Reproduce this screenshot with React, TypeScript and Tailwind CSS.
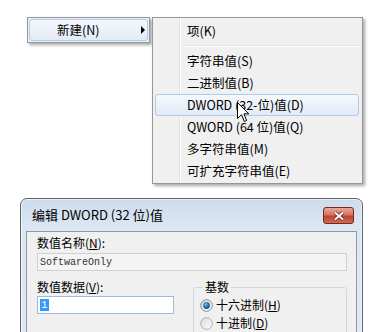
import React from "react";

type MenuItem = { label: string; highlighted?: boolean };

const submenuItems: MenuItem[] = [
  { label: "字符串值(S)" },
  { label: "二进制值(B)" },
  { label: "DWORD (32-位)值(D)", highlighted: true },
  { label: "QWORD (64 位)值(Q)" },
  { label: "多字符串值(M)" },
  { label: "可扩充字符串值(E)" },
];

// 右クリックメニュー（新建）
function ContextMenu() {
  return (
    <div className="w-[123px] border border-[#979797] bg-[#f0f0f0] p-[1px] shadow-[2px_2px_3px_rgba(0,0,0,0.35)]">
      <div className="flex h-[22px] items-center rounded-[3px] border border-[#aecbea] bg-[linear-gradient(#f5f9fd,#e1eaf6)] pl-[27px] pr-[2px]">
        <span className="text-[12.5px] leading-[22px]">新建(N)</span>
        <span className="ml-auto h-0 w-0 border-y-[4px] border-l-[4px] border-y-transparent border-l-black" />
      </div>
    </div>
  );
}

function SubMenuRow({ label, highlighted }: MenuItem) {
  return (
    <div
      className={
        highlighted
          ? "flex h-[22px] items-center rounded-[3px] border border-[#aecbea] bg-[linear-gradient(#f5f9fd,#e1eaf6)] pl-[31px]"
          : "flex h-[22px] items-center border border-transparent pl-[31px]"
      }
    >
      <span className="text-[12.5px] leading-[22px]">{label}</span>
    </div>
  );
}

function SubMenu() {
  return (
    <div className="ml-[2px] w-[211px] border border-[#979797] bg-[linear-gradient(to_right,#f0f0f0_26px,#e2e3e3_26px,#e2e3e3_27px,#ffffff_27px,#ffffff_28px,#f0f0f0_28px)] pb-[1px] pl-[2px] pr-[3px] pt-[2px] shadow-[2px_2px_3px_rgba(0,0,0,0.35)]">
      <SubMenuRow label="项(K)" />
      <div className="flex h-[8px] items-center pl-[28px]">
        <div className="h-[2px] w-full border-b border-b-white bg-[#e2e3e3]" />
      </div>
      {submenuItems.map((item) => (
        <SubMenuRow key={item.label} {...item} />
      ))}
    </div>
  );
}

function Cursor() {
  return (
    <svg
      className="absolute left-[237px] top-[102px]"
      width="14"
      height="22"
      viewBox="0 0 14 22"
    >
      <path
        d="M0.5 0.5 V16.5 L4.5 12.7 L7.3 19.5 L9.6 18.5 L6.9 11.9 L11.8 11.9 Z"
        fill="#ffffff"
        stroke="#000000"
        strokeWidth="1"
      />
    </svg>
  );
}

function Radio({ checked }: { checked?: boolean }) {
  const id = checked ? "rc" : "ru";
  return (
    <svg width="13" height="13" viewBox="0 0 13 13" className="shrink-0">
      <defs>
        <linearGradient id={id + "o"} x1="0" y1="0" x2="1" y2="1">
          <stop offset="0" stopColor="#d8d8d8" />
          <stop offset="1" stopColor="#ffffff" />
        </linearGradient>
        <radialGradient id={id + "d"} cx="0.4" cy="0.35" r="0.7">
          <stop offset="0" stopColor="#7ec3ec" />
          <stop offset="0.5" stopColor="#2a7bb0" />
          <stop offset="1" stopColor="#0e4670" />
        </radialGradient>
      </defs>
      <circle
        cx="6.5"
        cy="6.5"
        r="5.8"
        fill={`url(#${id}o)`}
        stroke={checked ? "#7f8a96" : "#b0b0b0"}
      />
      {checked && <circle cx="6.5" cy="6.5" r="3.4" fill={`url(#${id}d)`} />}
    </svg>
  );
}

function CloseButton() {
  return (
    <div className="ml-auto mr-[3px] mt-[8px] flex h-[17px] w-[31px] items-center justify-center rounded-[3px] border border-[#6e2a20] bg-[linear-gradient(#eaa99a,#d6735f_45%,#c2432e_55%,#cf6b52)]">
      <svg width="12" height="10" viewBox="0 0 12 10">
        <path d="M2 1.5 L10 8.5 M10 1.5 L2 8.5" stroke="#5a1f17" strokeWidth="3.4" />
        <path d="M2 1.5 L10 8.5 M10 1.5 L2 8.5" stroke="#ffffff" strokeWidth="2" />
      </svg>
    </div>
  );
}

function EditDialog() {
  return (
    <div className="ml-[20px] h-[140px] w-[343px] rounded-t-[7px] border border-[#5b6572] bg-[linear-gradient(#cddbeb,#dde7f3_30px,#dfe8f3)] px-[5px] shadow-[inset_0_0_0_1px_rgba(255,255,255,0.6)]">
      <div className="flex h-[32px] items-start">
        <span className="pl-[6px] pt-[7px] text-[13px] leading-[18px]">
          编辑 DWORD (32 位)值
        </span>
        <CloseButton />
      </div>
      <div className="h-[110px] border border-[#8a99ab] bg-[#f0f0f0] pl-[10px] pr-[9px] pt-[3px]">
        <div className="h-[16px] leading-[16px]">
          数值名称(<u>N</u>):
        </div>
        <div className="mt-[2px] flex h-[18px] items-center border border-[#d0d0d0] bg-[#f4f4f4] pl-[2px] font-['Liberation_Mono',monospace] text-[10px] text-[#333]">
          SoftwareOnly
        </div>
        <div className="mt-[8px] flex gap-[19px]">
          <div className="w-[137px]">
            <div className="h-[16px] leading-[16px]">
              数值数据(<u>V</u>):
            </div>
            <div className="mt-[1px] flex h-[18px] items-center border border-[#9fbcdc] bg-white pl-[2px]">
              <span className="bg-[#3399ff] px-[1px] font-['Liberation_Mono',monospace] text-[11px] leading-[12px] text-white">
                1
              </span>
            </div>
          </div>
          <fieldset className="h-[60px] flex-1 rounded-[3px] border border-[#d0d8de] pl-[6px]">
            <legend className="ml-[3px] px-[2px] leading-[16px]">基数</legend>
            <div className="flex h-[18px] items-center gap-[3px] pt-[2px]">
              <Radio checked />
              <span className="leading-[16px]">
                十六进制(<u>H</u>)
              </span>
            </div>
            <div className="flex h-[18px] items-center gap-[3px] pt-[2px]">
              <Radio />
              <span className="leading-[16px]">
                十进制(<u>D</u>)
              </span>
            </div>
          </fieldset>
        </div>
      </div>
    </div>
  );
}

export default function App() {
  return (
    <div className="h-[332px] w-[373px] overflow-hidden bg-white font-['Noto_Sans_CJK_SC','Microsoft_YaHei',sans-serif] text-[12px] text-black">
      <div className="relative h-[198px]">
        <div className="flex items-start pl-[27px] pt-[17px]">
          <ContextMenu />
          <SubMenu />
        </div>
        <Cursor />
      </div>
      <EditDialog />
    </div>
  );
}
